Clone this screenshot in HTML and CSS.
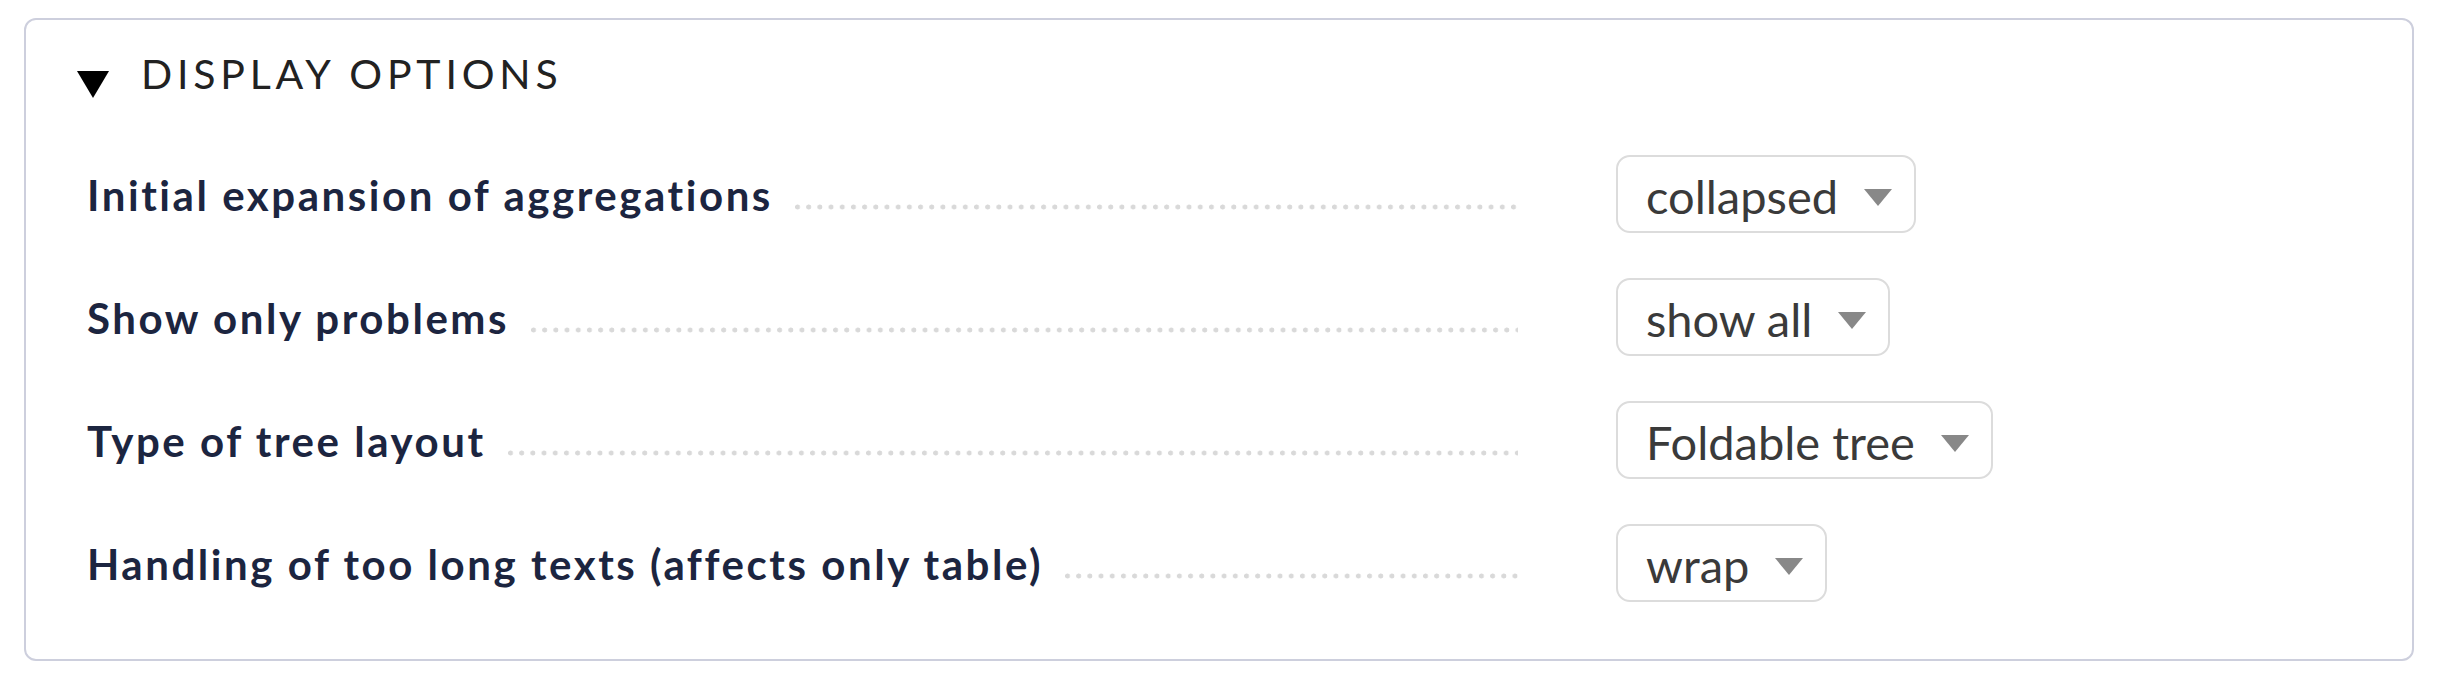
FILE: index.html
```html
<!DOCTYPE html>
<html lang="en">
<head>
<meta charset="utf-8">
<title>Display options</title>
<link rel="stylesheet" href="styles.css">
</head>
<body>
<div class="panel">
  <div class="panel-head">
    <svg class="fold" width="32" height="27" viewBox="0 0 32 27"><polygon points="0,0 32,0 16,27" fill="#000"/></svg>
    <span class="title">DISPLAY OPTIONS</span>
  </div>
  <div class="rows">
    <div class="row">
      <div class="legend"><span class="label">Initial expansion of aggregations</span><span class="dots"></span></div>
      <div class="select"><span class="value">collapsed</span><svg class="arrow" width="28" height="17" viewBox="0 0 28 17"><polygon points="0,0 28,0 14,17" fill="#888"/></svg></div>
    </div>
    <div class="row">
      <div class="legend"><span class="label">Show only problems</span><span class="dots"></span></div>
      <div class="select"><span class="value">show all</span><svg class="arrow" width="28" height="17" viewBox="0 0 28 17"><polygon points="0,0 28,0 14,17" fill="#888"/></svg></div>
    </div>
    <div class="row">
      <div class="legend"><span class="label">Type of tree layout</span><span class="dots"></span></div>
      <div class="select"><span class="value">Foldable tree</span><svg class="arrow" width="28" height="17" viewBox="0 0 28 17"><polygon points="0,0 28,0 14,17" fill="#888"/></svg></div>
    </div>
    <div class="row">
      <div class="legend"><span class="label">Handling of too long texts (affects only table)</span><span class="dots"></span></div>
      <div class="select"><span class="value">wrap</span><svg class="arrow" width="28" height="17" viewBox="0 0 28 17"><polygon points="0,0 28,0 14,17" fill="#888"/></svg></div>
    </div>
  </div>
</div>
</body>
</html>
```
FILE: styles.css
```css
html, body {
  margin: 0;
  padding: 0;
  background: #ffffff;
}

body {
  font-family: Lato, "Liberation Sans", sans-serif;
}

.panel {
  margin: 18px 30px 0 24px;
  border: 2px solid #cdcfdd;
  border-radius: 12px;
  padding: 29px 0 54px 0;
  box-sizing: border-box;
  height: 643px;
}

.panel-head {
  display: flex;
  align-items: flex-start;
  padding-left: 51px;
  height: 50px;
}

.fold {
  display: block;
  margin-top: 22px;
  flex: none;
}

.title {
  margin-left: 32px;
  font-size: 41px;
  line-height: 49px;
  font-weight: 400;
  letter-spacing: 4.8px;
  color: #222222;
}

.rows {
  display: flex;
  flex-direction: column;
  gap: 45px;
  margin-top: 56px;
  padding-left: 61px;
}

.row {
  display: flex;
  align-items: flex-start;
}

.legend {
  display: flex;
  align-items: flex-start;
  width: 1431px;
  margin-top: 15px;
  flex: none;
}

.label {
  font-size: 42px;
  line-height: 50px;
  font-weight: 700;
  letter-spacing: 2.55px;
  color: #1c2540;
  white-space: nowrap;
}

.dots {
  flex: 1;
  height: 6px;
  margin-top: 34px;
  margin-left: 22px;
  background-image: radial-gradient(circle at 2.5px 3px, #d9d9d9 2.2px, rgba(217,217,217,0) 2.8px);
  background-size: 11.2px 6px;
  background-repeat: repeat-x;
}

.select {
  display: flex;
  align-items: flex-start;
  box-sizing: border-box;
  height: 78px;
  margin-left: 98px;
  padding: 12px 22px 0 28px;
  border: 2px solid #dcdcdc;
  border-radius: 14px;
  background: #ffffff;
}

.value {
  font-size: 47px;
  line-height: 55px;
  font-weight: 400;
  color: #3a3a3a;
  white-space: nowrap;
}

.arrow {
  display: block;
  flex: none;
  margin-left: 26px;
  margin-top: 20px;
}
```
